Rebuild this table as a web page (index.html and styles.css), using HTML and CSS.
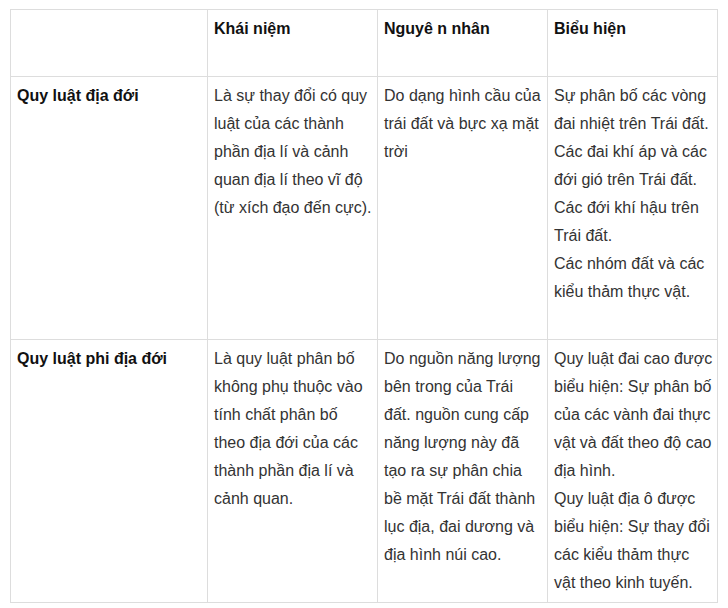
FILE: index.html
```html
<!DOCTYPE html>
<html lang="vi">
<head>
<meta charset="utf-8">
<link rel="stylesheet" href="styles.css">
</head>
<body>
<table class="grid">
  <colgroup>
    <col class="c1"><col class="c2"><col class="c3"><col class="c4">
  </colgroup>
  <tr class="tall">
    <th></th>
    <th>Khái niệm</th>
    <th>Nguyê n nhân</th>
    <th>Biểu hiện</th>
  </tr>
  <tr class="tall">
    <th>Quy luật địa đới</th>
    <td>Là sự thay đổi có quy<br>luật của các thành<br>phần địa lí và cảnh<br>quan địa lí theo vĩ độ<br>(từ xích đạo đến cực).</td>
    <td>Do dạng hình cầu của<br>trái đất và bực xạ mặt<br>trời</td>
    <td>Sự phân bố các vòng<br>đai nhiệt trên Trái đất.<br>Các đai khí áp và các<br>đới gió trên Trái đất.<br>Các đới khí hậu trên<br>Trái đất.<br>Các nhóm đất và các<br>kiểu thảm thực vật.</td>
  </tr>
  <tr>
    <th>Quy luật phi địa đới</th>
    <td>Là quy luật phân bố<br>không phụ thuộc vào<br>tính chất phân bố<br>theo địa đới của các<br>thành phần địa lí và<br>cảnh quan.</td>
    <td>Do nguồn năng lượng<br>bên trong của Trái<br>đất. nguồn cung cấp<br>năng lượng này đã<br>tạo ra sự phân chia<br>bề mặt Trái đất thành<br>lục địa, đai dương và<br>địa hình núi cao.</td>
    <td>Quy luật đai cao được<br>biểu hiện: Sự phân bố<br>của các vành đai thực<br>vật và đất theo độ cao<br>địa hình.<br>Quy luật địa ô được<br>biểu hiện: Sự thay đổi<br>các kiểu thảm thực<br>vật theo kinh tuyến.</td>
  </tr>
</table>
</body>
</html>
```
FILE: styles.css
```css
html, body {
  margin: 0;
  padding: 0;
  background: #ffffff;
}
body {
  padding: 9px 0 0 10px;
  font-family: "Liberation Sans", Arial, sans-serif;
  font-size: 16px;
  color: #333333;
}
.grid {
  border-collapse: collapse;
  table-layout: fixed;
  width: 708px;
}
.c1 { width: 197px; }
.c2 { width: 170px; }
.c3 { width: 170px; }
.c4 { width: 170px; }
.grid th,
.grid td {
  border: 1px solid #dddddd;
  padding: 5px 2px 5px 6px;
  line-height: 28px;
  vertical-align: top;
  text-align: left;
  white-space: nowrap;
  overflow: hidden;
}
.grid th {
  font-weight: bold;
  color: #111111;
}
.grid .tall th,
.grid .tall td {
  padding-bottom: 33px;
}
```
